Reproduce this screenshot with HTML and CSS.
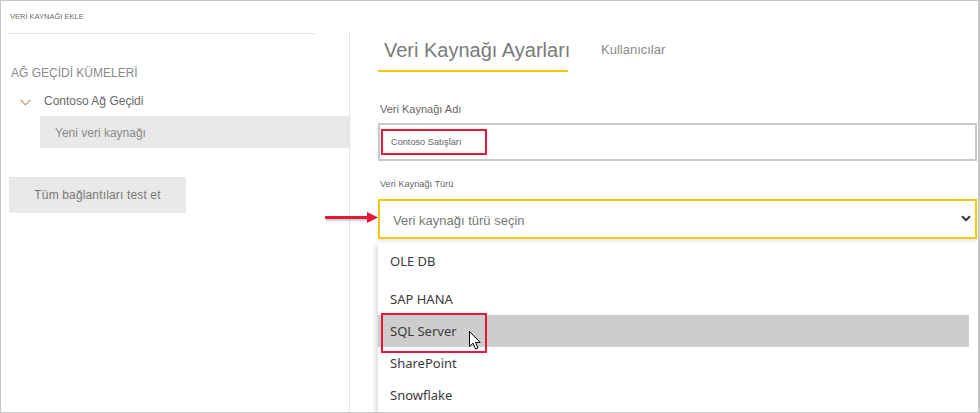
FILE: index.html
```html
<!DOCTYPE html>
<html lang="tr">
<head>
<meta charset="utf-8">
<title>Veri Kaynağı Ekle</title>
<link rel="stylesheet" href="styles.css">
</head>
<body>
<div class="frame">
  <aside class="left">
    <div class="left-head">VERİ KAYNAĞI EKLE</div>
    <div class="section-title">AĞ GEÇİDİ KÜMELERİ</div>
    <div class="tree-node">
      <svg class="tree-chev" width="11" height="7" viewBox="0 0 11 7"><polyline points="0.5,0.8 5.5,5.8 10.5,0.8" fill="none" stroke="#b98a6c" stroke-width="1.1"/></svg>
      <span>Contoso Ağ Geçidi</span>
    </div>
    <div class="tree-child">Yeni veri kaynağı</div>
    <div class="test-btn">Tüm bağlantıları test et</div>
  </aside>
  <main class="right">
    <div class="tabs">
      <div class="tab active">Veri Kaynağı Ayarları</div>
      <div class="tab">Kullanıcılar</div>
    </div>
    <div class="label name-label">Veri Kaynağı Adı</div>
    <div class="text-input"><span class="hl-box">Contoso Satışları</span></div>
    <div class="label type-label">Veri Kaynağı Türü</div>
    <div class="select">
      <span>Veri kaynağı türü seçin</span>
      <svg width="10" height="7" viewBox="0 0 10 7"><polyline points="1,1.2 5,5.2 9,1.2" fill="none" stroke="#333" stroke-width="2"/></svg>
    </div>
    <ul class="options">
      <li class="opt first">OLE DB</li>
      <li class="opt">SAP HANA</li>
      <li class="opt hover">SQL Server
        <span class="opt-mark"></span>
        <svg class="cursor" width="13" height="19" viewBox="0 0 13 19"><path d="M0.5 0.5 L0.5 15.5 L4 12.2 L6.6 18 L9 17 L6.5 11.4 L11.2 11.4 Z" fill="#fff" stroke="#000" stroke-width="1" stroke-linejoin="round"/></svg>
      </li>
      <li class="opt">SharePoint</li>
      <li class="opt">Snowflake</li>
    </ul>
  </main>
  <svg class="red-arrow" width="56" height="18" viewBox="0 0 56 18">
    <line x1="1" y1="8" x2="44" y2="8" stroke="rgba(0,0,0,0.18)" stroke-width="3" transform="translate(0,1.5)"/>
    <line x1="1" y1="7.5" x2="44" y2="7.5" stroke="#e8173a" stroke-width="3" stroke-linecap="round"/>
    <polygon points="42,2 53,7.5 42,13" fill="#e8173a"/>
  </svg>
</div>
</body>
</html>
```
FILE: styles.css
```css
* { box-sizing: border-box; }
html, body { margin: 0; padding: 0; background: #fff; }
body { font-family: "Liberation Sans", Arial, sans-serif; }

.frame {
  position: relative;
  width: 980px;
  height: 413px;
  border: 1px solid #c6c6c6;
  border-right-width: 2px;
  display: flex;
  overflow: hidden;
  background: #fff;
}

/* left column */
.left {
  width: 348px;
  flex: none;
  display: flex;
  flex-direction: column;
  align-items: flex-start;
}
.left-head {
  width: 307px;
  margin-left: 8px;
  height: 33px;
  padding: 11px 0 0 1px;
  border-bottom: 1px solid #e2e2e2;
  font-size: 7.5px;
  line-height: 10px;
  color: #6a6a6a;
}
.section-title {
  margin: 32px 0 0 10px;
  font-size: 12px;
  line-height: 14px;
  color: #8a8a8a;
}
.tree-node {
  display: flex;
  align-items: center;
  margin: 14px 0 0 19px;
  height: 14px;
  font-size: 12px;
  color: #6a6a6a;
}
.tree-chev { margin-right: 13px; margin-top: 3px; }
.tree-child {
  align-self: stretch;
  margin: 8px 0 0 39px;
  height: 32px;
  padding-left: 15px;
  line-height: 34px;
  font-size: 12px;
  background: #e9e9e9;
  color: #8a8a8a;
}
.test-btn {
  margin: 29px 0 0 8px;
  width: 177px;
  height: 36px;
  line-height: 36px;
  text-align: center;
  font-size: 12px;
  letter-spacing: 0.15px;
  background: #e9e9e9;
  color: #777;
}

/* right column */
.right {
  flex: 1;
  margin-top: 32px;
  border-left: 1px solid #e4e4e4;
  padding: 3px 1px 0 28px;
  display: flex;
  flex-direction: column;
}
.tabs {
  display: flex;
  gap: 33px;
  align-items: flex-start;
}
.tab {
  font-size: 13px;
  line-height: 28px;
  color: #8a8a8a;
  white-space: nowrap;
}
.tab.active {
  width: 190px;
  font-size: 20px;
  padding: 0 0 6px 6px;
  border-bottom: 2px solid #f2c811;
  color: #7a7a7a;
}
.label {
  color: #666;
  padding-left: 2px;
}
.name-label {
  margin-top: 30px;
  font-size: 11px;
  line-height: 14px;
}
.text-input {
  margin-top: 7px;
  height: 38px;
  border: 2px solid #c8c8c8;
  padding: 4px 0 0 1px;
}
.hl-box {
  display: inline-block;
  width: 106px;
  height: 26px;
  border: 2px solid #e8173a;
  padding-left: 8px;
  font-size: 9.2px;
  line-height: 23px;
  color: #666;
}
.type-label {
  margin-top: 17px;
  font-size: 9.2px;
  line-height: 12px;
}
.select {
  margin-top: 9px;
  height: 40px;
  border: 2px solid #f2c811;
  display: flex;
  align-items: center;
  justify-content: space-between;
  padding: 0 4px 0 13px;
  font-size: 13px;
  color: #777;
  box-shadow: 0 2px 4px rgba(0,0,0,0.10);
}
.select span { margin-top: 2px; }
.select svg { margin-top: -2px; }

.options {
  list-style: none;
  margin: 4px 0 0 0;
  padding: 2px 8px 0 0;
  flex: 1;
  background: #fff;
  box-shadow: -3px 2px 4px rgba(0,0,0,0.12);
  font-family: "Noto Sans", "Open Sans", sans-serif;
  font-size: 13px;
  color: #3a3a3a;
}
.opt {
  position: relative;
  height: 32px;
  line-height: 32px;
  padding-left: 12px;
}
.opt.first { margin-bottom: 6px; }
.opt.hover { background: #cdcdcd; }
.opt-mark {
  position: absolute;
  left: 3px;
  top: -2px;
  width: 106px;
  height: 40px;
  border: 2px solid #e8173a;
}
.cursor {
  position: absolute;
  left: 91px;
  top: 16px;
}

.red-arrow {
  position: absolute;
  left: 324px;
  top: 209px;
}
```
